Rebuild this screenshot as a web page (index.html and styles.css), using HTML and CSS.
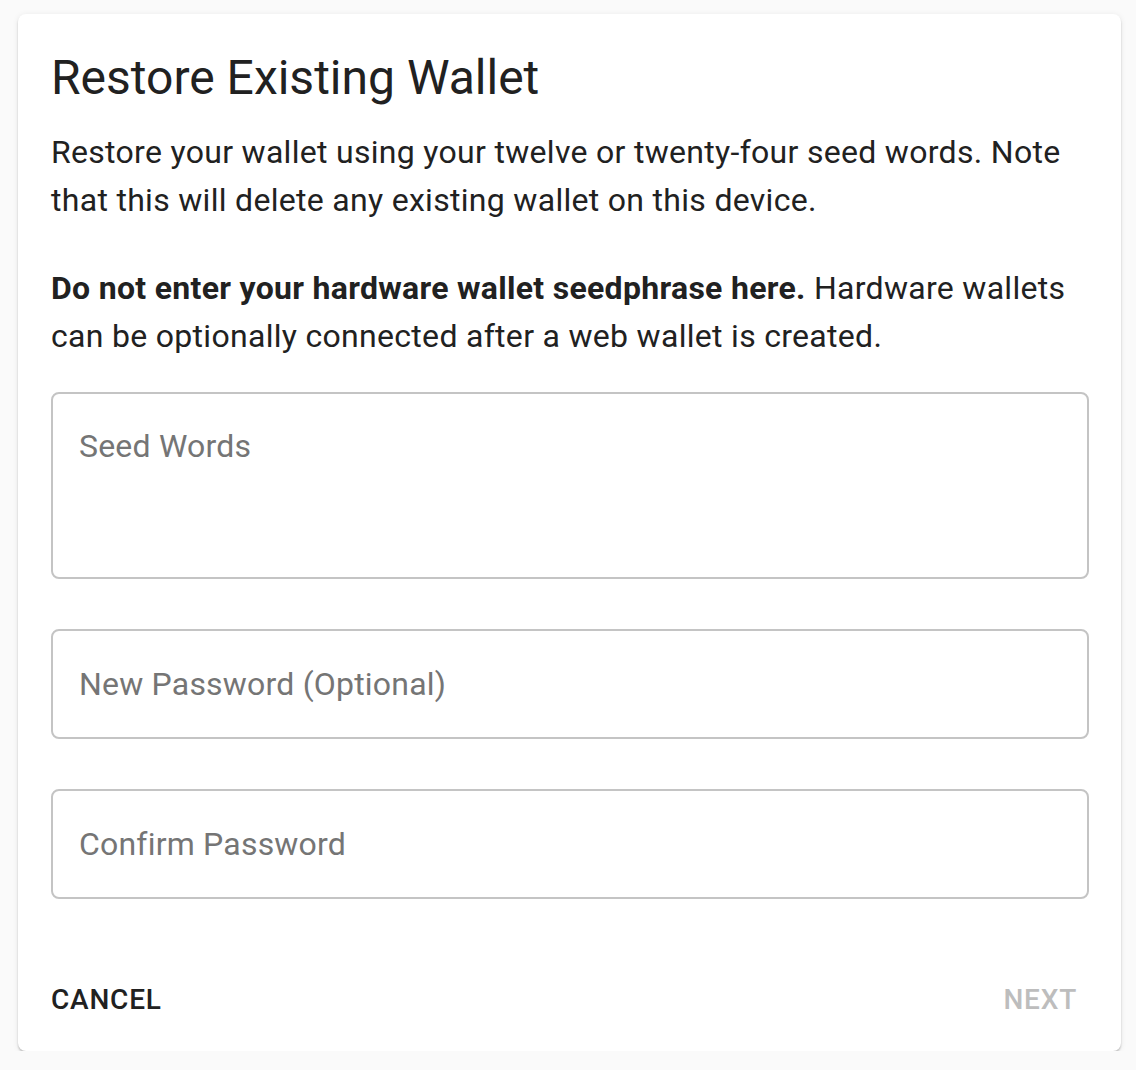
FILE: index.html
```html
<!DOCTYPE html>
<html>
<head>
<meta charset="utf-8">
<link rel="stylesheet" href="styles.css">
</head>
<body>
<div class="card">
  <h1 class="title">Restore Existing Wallet</h1>
  <p class="text">Restore your wallet using your twelve or twenty-four seed words. Note that this will delete any existing wallet on this device.</p>
  <p class="text"><strong>Do not enter your hardware wallet seedphrase here.</strong> Hardware wallets can be optionally connected after a web wallet is created.</p>
  <div class="field field-tall"><span class="placeholder">Seed Words</span></div>
  <div class="field"><span class="placeholder">New Password (Optional)</span></div>
  <div class="field"><span class="placeholder">Confirm Password</span></div>
  <div class="actions">
    <span class="btn">CANCEL</span>
    <span class="btn btn-disabled">NEXT</span>
  </div>
</div>
</body>
</html>
```
FILE: styles.css
```css
html, body {
  margin: 0;
  background: #fafafa;
}
body {
  padding: 14px 15px 0 18px;
  font-family: Roboto, "Liberation Sans", sans-serif;
  color: #212121;
}
.card {
  width: 1103px;
  box-sizing: border-box;
  background: #fff;
  border-radius: 8px;
  box-shadow: 0 2px 2px rgba(0,0,0,0.2), 0 1px 6px rgba(0,0,0,0.08);
  padding: 36px 32px 35px 33px;
  height: 1037px;
  display: flex;
  flex-direction: column;
}
.title {
  margin: 0 0 22px 0;
  font-size: 48px;
  font-weight: 400;
  line-height: 56px;
}
.text {
  margin: 0 0 40px 0;
  font-size: 32px;
  line-height: 48px;
  letter-spacing: 0.3px;
}
.text + .text {
  margin-bottom: 32px;
}
.text strong {
  font-weight: 700;
}
.field {
  border: 2px solid #c4c4c4;
  border-radius: 8px;
  height: 110px;
  box-sizing: border-box;
  display: flex;
  align-items: center;
  padding: 0 26px;
  margin-bottom: 50px;
}
.field-tall {
  height: 187px;
  align-items: flex-start;
  padding-top: 34px;
}
.placeholder {
  font-size: 32px;
  color: #757575;
  line-height: 36px;
  letter-spacing: 0.2px;
}
.actions {
  margin-top: auto;
  display: flex;
  justify-content: space-between;
  align-items: center;
}
.btn {
  font-size: 28px;
  font-weight: 500;
  letter-spacing: 0.8px;
  color: #212121;
}
.btn-disabled {
  color: #bdbdbd;
  margin-right: 12px;
}
```
